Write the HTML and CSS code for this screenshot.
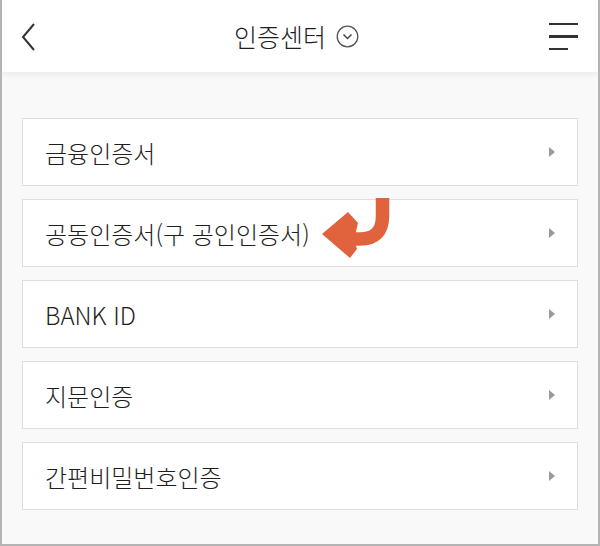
FILE: index.html
```html
<!DOCTYPE html>
<html lang="ko">
<head>
    <meta charset="UTF-8">
    <meta name="viewport" content="width=device-width, initial-scale=1.0">
    <title>인증센터</title>
    <link rel="stylesheet" href="styles.css">
</head>
<body>

    <div class="screen">
        <!-- Top bar -->
        <header class="topbar">
            <svg class="back-icon" width="16" height="30" viewBox="0 0 16 30">
                <polyline points="13,2 2,15 13,28" fill="none" stroke="#333" stroke-width="2"/>
            </svg>
            <div class="title">
                <span>인증센터</span>
                <svg class="title-icon" width="23" height="23" viewBox="0 0 23 23">
                    <circle cx="11.5" cy="11.5" r="10.3" fill="none" stroke="#555" stroke-width="1.3"/>
                    <polyline points="7.5,9.5 11.5,13.5 15.5,9.5" fill="none" stroke="#444" stroke-width="1.5"/>
                </svg>
            </div>
            <div class="menu-icon">
                <span></span>
                <span></span>
                <span class="short"></span>
            </div>
        </header>

        <!-- Menu list -->
        <main class="list">
            <a class="item" href="#">금융인증서<i class="caret"></i></a>
            <a class="item" href="#">
                공동인증서(구 공인인증서)<i class="caret"></i>
                <svg class="pointer" width="70" height="62" viewBox="0 0 70 62">
                    <path d="M61.5 1 V19 Q61.5 42 39 42 H26" fill="none" stroke="#e0633d" stroke-width="13.5"/>
                    <polygon points="1,37 27,15 37,26 33,43 36,52 29,61" fill="#e0633d"/>
                </svg>
            </a>
            <a class="item" href="#">BANK ID<i class="caret"></i></a>
            <a class="item" href="#">지문인증<i class="caret"></i></a>
            <a class="item" href="#">간편비밀번호인증<i class="caret"></i></a>
        </main>
    </div>

</body>
</html>
```
FILE: styles.css
```css
/* Page frame */
body {
    margin: 0;
    font-family: "Noto Sans CJK KR", "Noto Sans", sans-serif;
    color: #222;
}

.screen {
    box-sizing: border-box;
    width: 600px;
    height: 546px;
    background-color: #f9f9f9;
    border-left: 2px solid #b4b4b4;
    border-right: 2px solid #b4b4b4;
    border-bottom: 2px solid #b4b4b4;
    overflow: hidden;
}

/* Top bar */
.topbar {
    height: 72px;
    background-color: #fff;
    display: grid;
    grid-template-columns: 1fr auto 1fr;
    align-items: center;
    padding: 0 20px 0 19px;
    box-shadow: 0 2px 8px rgba(0, 0, 0, 0.08);
}

.back-icon {
    display: block;
    margin-top: 2px;
}

.title {
    display: flex;
    align-items: center;
    gap: 10px;
    font-size: 25px;
    font-weight: 300;
    color: #1e1e1e;
    margin-top: -1px;
    margin-right: 6px;
}

.title-icon {
    display: block;
    margin-top: 2px;
}

.menu-icon {
    justify-self: end;
    display: flex;
    flex-direction: column;
    align-items: flex-start;
    gap: 10px;
    width: 29px;
    margin-top: 1px;
}

.menu-icon span {
    display: block;
    width: 29px;
    height: 2.5px;
    background-color: #333;
}

.menu-icon span.short {
    width: 19px;
}

/* List of items */
.list {
    display: flex;
    flex-direction: column;
    gap: 13px;
    padding: 46px 20px 0;
}

.item {
    position: relative;
    box-sizing: border-box;
    height: 68px;
    display: flex;
    align-items: center;
    justify-content: space-between;
    padding: 0 22px;
    background-color: #fff;
    border: 1px solid #dedede;
    color: #1e1e1e;
    font-size: 24px;
    font-weight: 300;
    text-decoration: none;
}

.caret {
    display: block;
    width: 0;
    height: 0;
    border-top: 5px solid transparent;
    border-bottom: 5px solid transparent;
    border-left: 6px solid #9a9a9a;
}

/* Orange annotation arrow */
.pointer {
    position: absolute;
    left: 298px;
    top: -3px;
}
```
